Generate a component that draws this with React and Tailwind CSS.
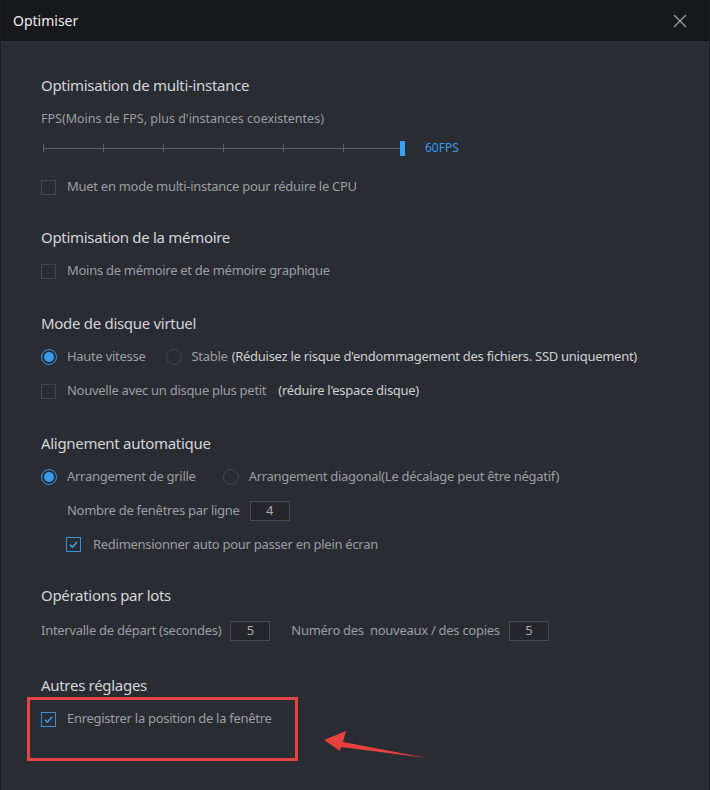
import React from "react";

const font = { fontFamily: '"Noto Sans", "Noto Sans CJK SC", sans-serif' };

function Checkbox({ checked }) {
  return checked ? (
    <span className="w-[15px] h-[15px] border border-[#3a8fd9] flex items-center justify-center shrink-0">
      <svg width="11" height="11" viewBox="0 0 11 11">
        <path d="M2 5.8 L4.4 8 L9 3" fill="none" stroke="#3a9ae8" strokeWidth="1.6" />
      </svg>
    </span>
  ) : (
    <span className="block w-[15px] h-[15px] border border-[#44474e] shrink-0" />
  );
}

function Radio({ checked }) {
  return checked ? (
    <span className="w-[16px] h-[16px] rounded-full border-[1.5px] border-[#3a9ae8] flex items-center justify-center shrink-0">
      <span className="block w-[10px] h-[10px] rounded-full bg-[#3a9ae8]" />
    </span>
  ) : (
    <span className="block w-[16px] h-[16px] rounded-full border border-[#44474e] shrink-0" />
  );
}

function Input({ value }) {
  return (
    <span className="w-[40px] h-[20px] border border-[#474a52] bg-[#24262b] text-[#a9abb0] text-[13px] flex items-center justify-center shrink-0">
      {value}
    </span>
  );
}

function Title({ children, className = "" }) {
  return (
    <div className={"h-[34px] flex items-center text-[15px] tracking-[-0.3px] text-[#d4d5d8] " + className}>{children}</div>
  );
}

export default function App() {
  const ticks = [0, 60, 120, 180, 240, 300];
  return (
    <div style={font} className="relative w-[710px] h-[790px] bg-[#292c32] border-l border-r border-[#1b1c20] overflow-hidden">
      <div className="h-[41px] bg-[#17181c] flex items-center justify-between pl-[12px] pr-[22px]">
        <span className="text-[14px] text-[#eeeeee]">Optimiser</span>
        <svg width="14" height="14" viewBox="0 0 14 14">
          <path d="M1 1 L13 13 M13 1 L1 13" stroke="#a0a2a6" strokeWidth="1.2" />
        </svg>
      </div>

      <div className="pl-[40px] pt-[27px] text-[13px] tracking-[-0.28px] text-[#9c9ea3]">
        <Title>Optimisation de multi-instance</Title>
        <div className="h-[34px] flex items-center text-[12.5px] tracking-normal">FPS(Moins de FPS, plus d'instances coexistentes)</div>
        <div className="h-[24px] flex items-center">
          <div className="relative w-[364px] h-[16px] shrink-0">
            <div className="absolute left-[2px] right-[4px] top-[8px] h-px bg-[#5d6067]" />
            {ticks.map((t) => (
              <div key={t} style={{ left: 2 + t }} className="absolute top-[4px] w-px h-[8px] bg-[#5d6067]" />
            ))}
            <div className="absolute left-[359px] top-[1px] w-[5px] h-[15px] bg-[#3ba0ef]" />
          </div>
          <span className="ml-[20px] text-[12px] tracking-normal text-[#3a9ae8]">60FPS</span>
        </div>
        <div className="h-[34px] mt-[10px] flex items-center gap-[11px]">
          <Checkbox />
          <span>Muet en mode multi-instance pour réduire le CPU</span>
        </div>

        <Title className="mt-[16px]">Optimisation de la mémoire</Title>
        <div className="h-[34px] flex items-center gap-[11px]">
          <Checkbox />
          <span>Moins de mémoire et de mémoire graphique</span>
        </div>

        <Title className="mt-[18px]">Mode de disque virtuel</Title>
        <div className="h-[34px] flex items-center">
          <Radio checked />
          <span className="ml-[10px]">Haute vitesse</span>
          <span className="ml-[20px]"><Radio /></span>
          <span className="ml-[10px]">Stable</span>
          <span className="ml-[4px] text-[#cfd0d3]">(Réduisez le risque d'endommagement des fichiers. SSD uniquement)</span>
        </div>
        <div className="h-[34px] flex items-center gap-[11px]">
          <Checkbox />
          <span>Nouvelle avec un disque plus petit</span>
          <span className="ml-[1px] text-[#cfd0d3]">(réduire l'espace disque)</span>
        </div>

        <Title className="mt-[18px]">Alignement automatique</Title>
        <div className="h-[34px] flex items-center">
          <Radio checked />
          <span className="ml-[10px]">Arrangement de grille</span>
          <span className="ml-[27px]"><Radio /></span>
          <span className="ml-[10px]">Arrangement diagonal(Le décalage peut être négatif)</span>
        </div>
        <div className="h-[34px] pl-[26px] flex items-center gap-[10px]">
          <span>Nombre de fenêtres par ligne</span>
          <Input value="4" />
        </div>
        <div className="h-[33px] pl-[25px] flex items-center gap-[12px]">
          <Checkbox checked />
          <span>Redimensionner auto pour passer en plein écran</span>
        </div>

        <Title className="mt-[17px]">Opérations par lots</Title>
        <div className="h-[34px] mt-[2px] flex items-center">
          <span>Intervalle de départ (secondes)</span>
          <span className="ml-[9px]"><Input value="5" /></span>
          <span className="ml-[21px]">Numéro des&nbsp; nouveaux / des copies</span>
          <span className="ml-[9px]"><Input value="5" /></span>
        </div>

        <Title className="mt-[20px]">Autres réglages</Title>
        <div className="h-[34px] flex items-center gap-[11px]">
          <Checkbox checked />
          <span>Enregistrer la position de la fenêtre</span>
        </div>
      </div>

      <div className="absolute left-[26px] top-[697px] w-[271px] h-[64px] border-[3px] border-[#e34545]" />
      <svg className="absolute left-0 top-0" width="710" height="790" viewBox="0 0 710 790">
        <polygon points="323,740 345,731 342,742 426,758 340,747 339,751" fill="#e8403d" />
      </svg>
    </div>
  );
}
